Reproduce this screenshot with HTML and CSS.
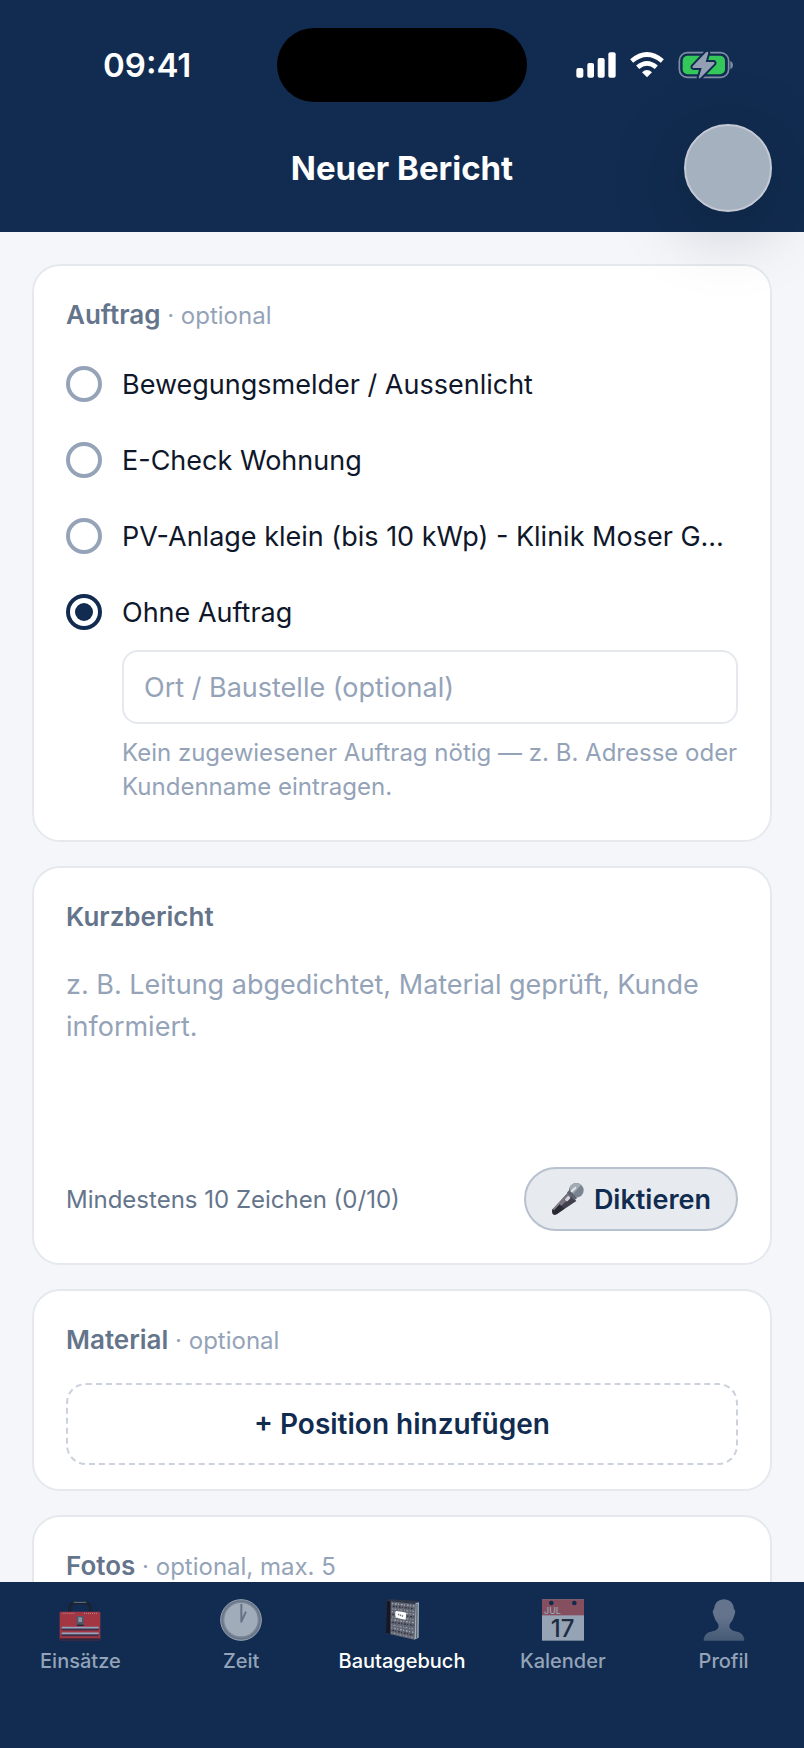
FILE: index.html
```html
<!DOCTYPE html>
<html lang="de">
<head>
    <meta charset="UTF-8">
    <meta name="viewport" content="width=device-width, initial-scale=1.0">
    <title>Neuer Bericht</title>
    <link rel="stylesheet" href="styles.css">
</head>
<body>
    <header class="header">
        <div class="status-bar">
            <span class="time">09:41</span>
            <div class="island"></div>
            <div class="status-icons">
                <svg width="40" height="26" viewBox="0 0 120 78" fill="#fff">
                    <rect x="1" y="48" width="21" height="29" rx="6"/>
                    <rect x="34" y="33" width="20" height="44" rx="6"/>
                    <rect x="65" y="18" width="21" height="59" rx="6"/>
                    <rect x="97" y="1" width="22" height="76" rx="6"/>
                </svg>
                <svg width="34" height="26" viewBox="0 0 102 78">
                    <g fill="none" stroke="#fff" stroke-width="14">
                        <path d="M5 27 Q51 -12 97 27"/>
                        <path d="M23 46 Q51 22 79 46"/>
                    </g>
                    <path d="M51 76 L36 61 Q51 47 66 61 Z" fill="#fff"/>
                </svg>
                <svg width="56" height="28" viewBox="0 0 168 84">
                    <rect x="4" y="5" width="148" height="74" rx="24" fill="none" stroke="#7f8ea6" stroke-width="5"/>
                    <path d="M157 30 Q165 33 165 42 Q165 51 157 54 Z" fill="#7f8ea6"/>
                    <rect x="14" y="14" width="127" height="56" rx="15" fill="#34c759"/>
                    <path d="M84 4 L44 46 Q42 51 47 51 L71 51 L62 80 Q64 85 69 79 L109 38 Q111 33 106 33 L83 33 L91 5 Q89 0 84 4 Z" fill="#93a0b4" stroke="#112c50" stroke-width="12" stroke-linejoin="round" paint-order="stroke"/>
                </svg>
            </div>
        </div>
        <div class="title-bar">
            <h1>Neuer Bericht</h1>
            <button type="button" class="round-btn" aria-label="Schließen"></button>
        </div>
    </header>

    <main class="content">
        <!-- Auftrag -->
        <fieldset class="card card-order">
            <legend class="card-title">Auftrag<span class="optional"> · optional</span></legend>
            <div class="radio-list">
                <label class="radio-row">
                    <input type="radio" name="auftrag">
                    <span>Bewegungsmelder / Aussenlicht</span>
                </label>
                <label class="radio-row">
                    <input type="radio" name="auftrag">
                    <span>E-Check Wohnung</span>
                </label>
                <label class="radio-row">
                    <input type="radio" name="auftrag">
                    <span>PV-Anlage klein (bis 10 kWp) - Klinik Moser GmbH</span>
                </label>
                <label class="radio-row">
                    <input type="radio" name="auftrag" checked>
                    <span>Ohne Auftrag</span>
                </label>
            </div>
            <div class="place">
                <input type="text" class="place-input" placeholder="Ort / Baustelle (optional)" aria-label="Ort / Baustelle" aria-describedby="placeHint">
                <p class="hint" id="placeHint">Kein zugewiesener Auftrag nötig — z. B. Adresse oder Kundenname eintragen.</p>
            </div>
        </fieldset>

        <!-- Kurzbericht -->
        <section class="card">
            <label class="card-title" for="report">Kurzbericht</label>
            <textarea class="report" id="report" placeholder="z. B. Leitung abgedichtet, Material geprüft, Kunde informiert."></textarea>
            <div class="report-footer">
                <span class="counter">Mindestens 10 Zeichen (0/10)</span>
                <button type="button" class="dictate-btn">
                    <svg width="34" height="34" viewBox="0 0 102 102">
                        <path d="M52 31 L76 57 L18 96 Q10 101 5 95 Q0 89 5 82 Z" fill="#42404d"/>
                        <path d="M52 31 L62 41 L10 92 Q2 93 5 82 Z" fill="#77747f"/>
                        <path d="M24 65 L40 80 L18 96 Q10 101 5 95 Q0 89 5 82 Z" fill="#292936"/>
                        <path d="M7 83 L27 62" stroke="#85828b" stroke-width="5"/>
                        <rect x="45" y="42" width="10" height="16" rx="3" transform="rotate(45 50 50)" fill="#d0d3d8"/>
                        <circle cx="76" cy="25" r="22" fill="#7a8490"/>
                        <path d="M57 12 Q73 -4 91 9 Q83 16 67 35 Q55 27 57 12 Z" fill="#a2aab3"/>
                        <path d="M55 23 L78 49 L70 55 L48 32 Z" fill="#5d6370"/>
                        <path d="M60 29 L75 16" stroke="#e4e7ea" stroke-width="6"/>
                    </svg>
                    <span>Diktieren</span>
                </button>
            </div>
        </section>

        <!-- Material -->
        <section class="card card-material">
            <h2 class="card-title">Material<span class="optional"> · optional</span></h2>
            <button type="button" class="add-btn">+ Position hinzufügen</button>
        </section>

        <!-- Fotos -->
        <section class="card card-photos">
            <h2 class="card-title">Fotos<span class="optional"> · optional, max. 5</span></h2>
        </section>
    </main>

    <nav class="tab-bar">
        <a href="#" class="tab">
            <svg width="42" height="42" viewBox="0 0 126 126">
                <path d="M32 40 V28 Q32 12 47 12 H80 Q94 12 94 28 V40" fill="none" stroke="#1b2230" stroke-width="9"/>
                <path d="M44 10 H82" stroke="#66758a" stroke-width="3"/>
                <rect x="2" y="38" width="122" height="86" rx="3" fill="#a33643"/>
                <path d="M3 121 H123" stroke="#34263c" stroke-width="6"/>
                <path d="M11 43 H48 M75 43 H116" stroke="#c18b96" stroke-width="3" stroke-dasharray="3 3"/>
                <rect x="53" y="51" width="21" height="27" fill="#4e5969"/>
                <rect x="58" y="55" width="11" height="14" fill="#8995a5"/>
                <path d="M54 79 H74" stroke="#202638" stroke-width="4"/>
                <path d="M8 90 H119 M8 107 H119" stroke="#403049" stroke-width="9"/>
                <path d="M8 86 H119 M8 103 H119" stroke="#94a5be" stroke-width="5"/>
            </svg>
            <span>Einsätze</span>
        </a>
        <a href="#" class="tab">
            <svg width="42" height="42" viewBox="0 0 126 126">
                <circle cx="63" cy="63" r="61" fill="#6b7788" stroke="#98a3b2" stroke-width="3"/>
                <circle cx="63" cy="62" r="52" fill="#a0acba" stroke="#7a8798" stroke-width="4"/>
                <path d="M64 15 V68 L78 38" fill="none" stroke="#667386" stroke-width="6" stroke-linejoin="round"/>
            </svg>
            <span>Zeit</span>
        </a>
        <a href="#" class="tab active">
            <svg width="42" height="42" viewBox="0 0 126 126">
                <path d="M16 4 L105 14 L116 7 L29 1 Z" fill="#343846"/>
                <path d="M103 13 L114 10 L113 116 L99 122 Z" fill="#9eabb7"/>
                <path d="M108 15 L107 117" stroke="#4b5563" stroke-width="3"/>
                <path d="M16 5 L104 15 L100 122 L15 103 Z" fill="#626571"/>
                <path d="M16 5 L29 7 L28 106 L15 103 Z" fill="#151824"/>
                <path d="M33 14 L101 21 M32 38 L100 46 M31 62 L100 71 M31 86 L98 100" fill="none" stroke="#a3afba" stroke-width="4" stroke-dasharray="3 6 5 4"/>
                <path d="M36 22 L98 29 M34 46 L98 54 M34 70 L98 79 M34 94 L96 108" fill="none" stroke="#2b303d" stroke-width="4" stroke-dasharray="5 4 3 6"/>
                <path d="M33 30 L99 37 M34 54 L98 62 M31 78 L98 90 M31 101 L96 116" fill="none" stroke="#8a97a5" stroke-width="4" stroke-dasharray="3 4 6 5"/>
                <path d="M45 36 Q63 38 76 41 L74 62 Q56 61 44 55 Q40 45 45 36 Z" fill="#fff"/>
                <path d="M51 46 L67 52" stroke="#727b8a" stroke-width="5" stroke-dasharray="4 2"/>
            </svg>
            <span>Bautagebuch</span>
        </a>
        <a href="#" class="tab">
            <svg width="42" height="42" viewBox="0 0 126 126">
                <rect x="0" y="1" width="126" height="124" fill="#96a3b4"/>
                <rect x="0" y="1" width="126" height="48" fill="#854f5f"/>
                <circle cx="28" cy="12" r="7" fill="#102b4d"/>
                <circle cx="97" cy="12" r="7" fill="#102b4d"/>
                <text x="6" y="44" class="cal-month">JUL</text>
                <text x="62" y="113" text-anchor="middle" class="cal-day">17</text>
            </svg>
            <span>Kalender</span>
        </a>
        <a href="#" class="tab">
            <svg width="42" height="42" viewBox="0 0 126 126">
                <defs>
                    <linearGradient id="person" x1="0" y1="0" x2="0" y2="1">
                        <stop offset="0.4" stop-color="#65748d"/>
                        <stop offset="1" stop-color="#455a76"/>
                    </linearGradient>
                </defs>
                <path d="M63 1 Q90 2 93 30 Q100 36 94 49 Q90 66 80 76 Q77 91 91 95 L108 100 Q123 105 124 125 H2 Q3 105 18 100 L35 95 Q49 91 46 76 Q36 66 32 49 Q26 36 33 30 Q36 2 63 1 Z" fill="url(#person)"/>
            </svg>
            <span>Profil</span>
        </a>
    </nav>
</body>
</html>
```
FILE: styles.css
```css
* {
    box-sizing: border-box;
}

body {
    font-family: Inter, 'Liberation Sans', sans-serif;
    background-color: #f4f6fa;
    color: #0f172a;
    margin: 0;
    height: 100vh;
    display: flex;
    flex-direction: column;
    overflow: hidden;
}

button,
input,
textarea {
    font-family: inherit;
}

/* Header */
.header {
    position: relative;
    z-index: 1;
    background-color: #112c50;
    color: #fff;
}

.status-bar {
    display: grid;
    grid-template-columns: 1fr auto 1fr;
    align-items: center;
    padding: 28px 70px 0;
}

.time {
    padding-left: 33px;
    font-size: 33px;
    font-weight: 600;
}

.island {
    width: 250px;
    height: 74px;
    border-radius: 37px;
    background-color: #000;
}

.status-icons {
    display: flex;
    align-items: center;
    justify-content: flex-end;
    gap: 14px;
}

.title-bar {
    display: grid;
    grid-template-columns: 1fr auto 1fr;
    align-items: center;
    padding: 22px 32px 20px;
}

.title-bar h1 {
    grid-column: 2;
    margin: 0;
    font-size: 33px;
    font-weight: 700;
}

.round-btn {
    justify-self: end;
    width: 88px;
    height: 88px;
    padding: 0;
    border: 2px solid #c3cad4;
    border-radius: 50%;
    background-color: #a6b1c0;
    box-shadow: 0 16px 72px rgba(0, 16, 28, 0.26);
}

/* Cards */
.content {
    flex: 1;
    min-height: 0;
    display: flex;
    flex-direction: column;
    gap: 24px;
    padding: 32px 32px 0;
    overflow-y: auto;
    scrollbar-width: none;
}

.card {
    flex-shrink: 0;
    min-width: 0;
    margin: 0;
    padding: 32px;
    border: 2px solid #e5e9ee;
    border-radius: 28px;
    background-color: #fff;
}

.card-order {
    padding-bottom: 36px;
}

.card-material {
    padding-bottom: 24px;
}

.card-photos {
    padding-bottom: 200px;
}

.card-title {
    display: block;
    margin: 0;
    padding: 0;
    color: #64748b;
    font-size: 26px;
    font-weight: 600;
    line-height: 34px;
}

/* keeps the legend inside the card like the other titles */
legend.card-title {
    float: left;
    width: 100%;
}

.optional {
    color: #94a3b8;
    font-size: 24px;
    font-weight: 400;
}

.radio-list {
    clear: both;
    padding-top: 13px;
}

.radio-row {
    display: flex;
    align-items: center;
    gap: 20px;
    height: 76px;
    font-size: 27px;
}

.radio-row span {
    min-width: 0;
    overflow: hidden;
    text-overflow: ellipsis;
    white-space: nowrap;
}

.radio-row input {
    appearance: none;
    flex-shrink: 0;
    display: grid;
    place-items: center;
    width: 36px;
    height: 36px;
    margin: 0;
    border: 4px solid #94a3b8;
    border-radius: 50%;
}

.radio-row input:checked {
    border-color: #112c50;
}

.radio-row input:checked::before {
    content: '';
    width: 18px;
    height: 18px;
    border-radius: 50%;
    background-color: #112c50;
}

.place {
    padding-left: 56px;
}

.place-input {
    display: block;
    width: 100%;
    height: 74px;
    padding: 0 20px;
    border: 2px solid #e5e9ee;
    border-radius: 16px;
    font-size: 27px;
}

.place-input::placeholder,
.report::placeholder {
    color: #94a3b8;
    opacity: 1;
}

.hint {
    margin: 12px 0 0;
    color: #94a3b8;
    font-size: 24px;
    line-height: 34px;
}

.report {
    display: block;
    width: 100%;
    height: 199px;
    margin: 18px 0 16px;
    padding: 12px 0;
    border: none;
    resize: none;
    font-size: 27px;
    line-height: 42px;
}

.report-footer {
    display: flex;
    align-items: center;
    justify-content: space-between;
}

.counter {
    color: #64748b;
    font-size: 24px;
}

.dictate-btn {
    display: flex;
    align-items: center;
    gap: 9px;
    height: 64px;
    padding: 0 25px;
    border: 2px solid #b8c1cf;
    border-radius: 32px;
    background-color: #e7eaee;
    color: #112c50;
    font-size: 27px;
    font-weight: 600;
}

.add-btn {
    display: block;
    width: 100%;
    height: 82px;
    margin-top: 25px;
    border: 2px dashed #cbd2dc;
    border-radius: 20px;
    background-color: #fff;
    color: #112c50;
    font-size: 28px;
    font-weight: 600;
}

/* Bottom navigation */
.tab-bar {
    display: flex;
    height: 166px;
    padding-top: 17px;
    background-color: #112c50;
}

.tab {
    flex: 1;
    display: flex;
    flex-direction: column;
    align-items: center;
    gap: 6px;
    color: #94a3b8;
    font-size: 20px;
    font-weight: 500;
    line-height: 28px;
    text-decoration: none;
}

.tab svg {
    overflow: visible;
}

.tab.active {
    color: #fff;
}

.cal-month {
    fill: #9aa5b5;
    font-size: 27px;
}

.cal-day {
    fill: #202c40;
    font-size: 72px;
}
```
